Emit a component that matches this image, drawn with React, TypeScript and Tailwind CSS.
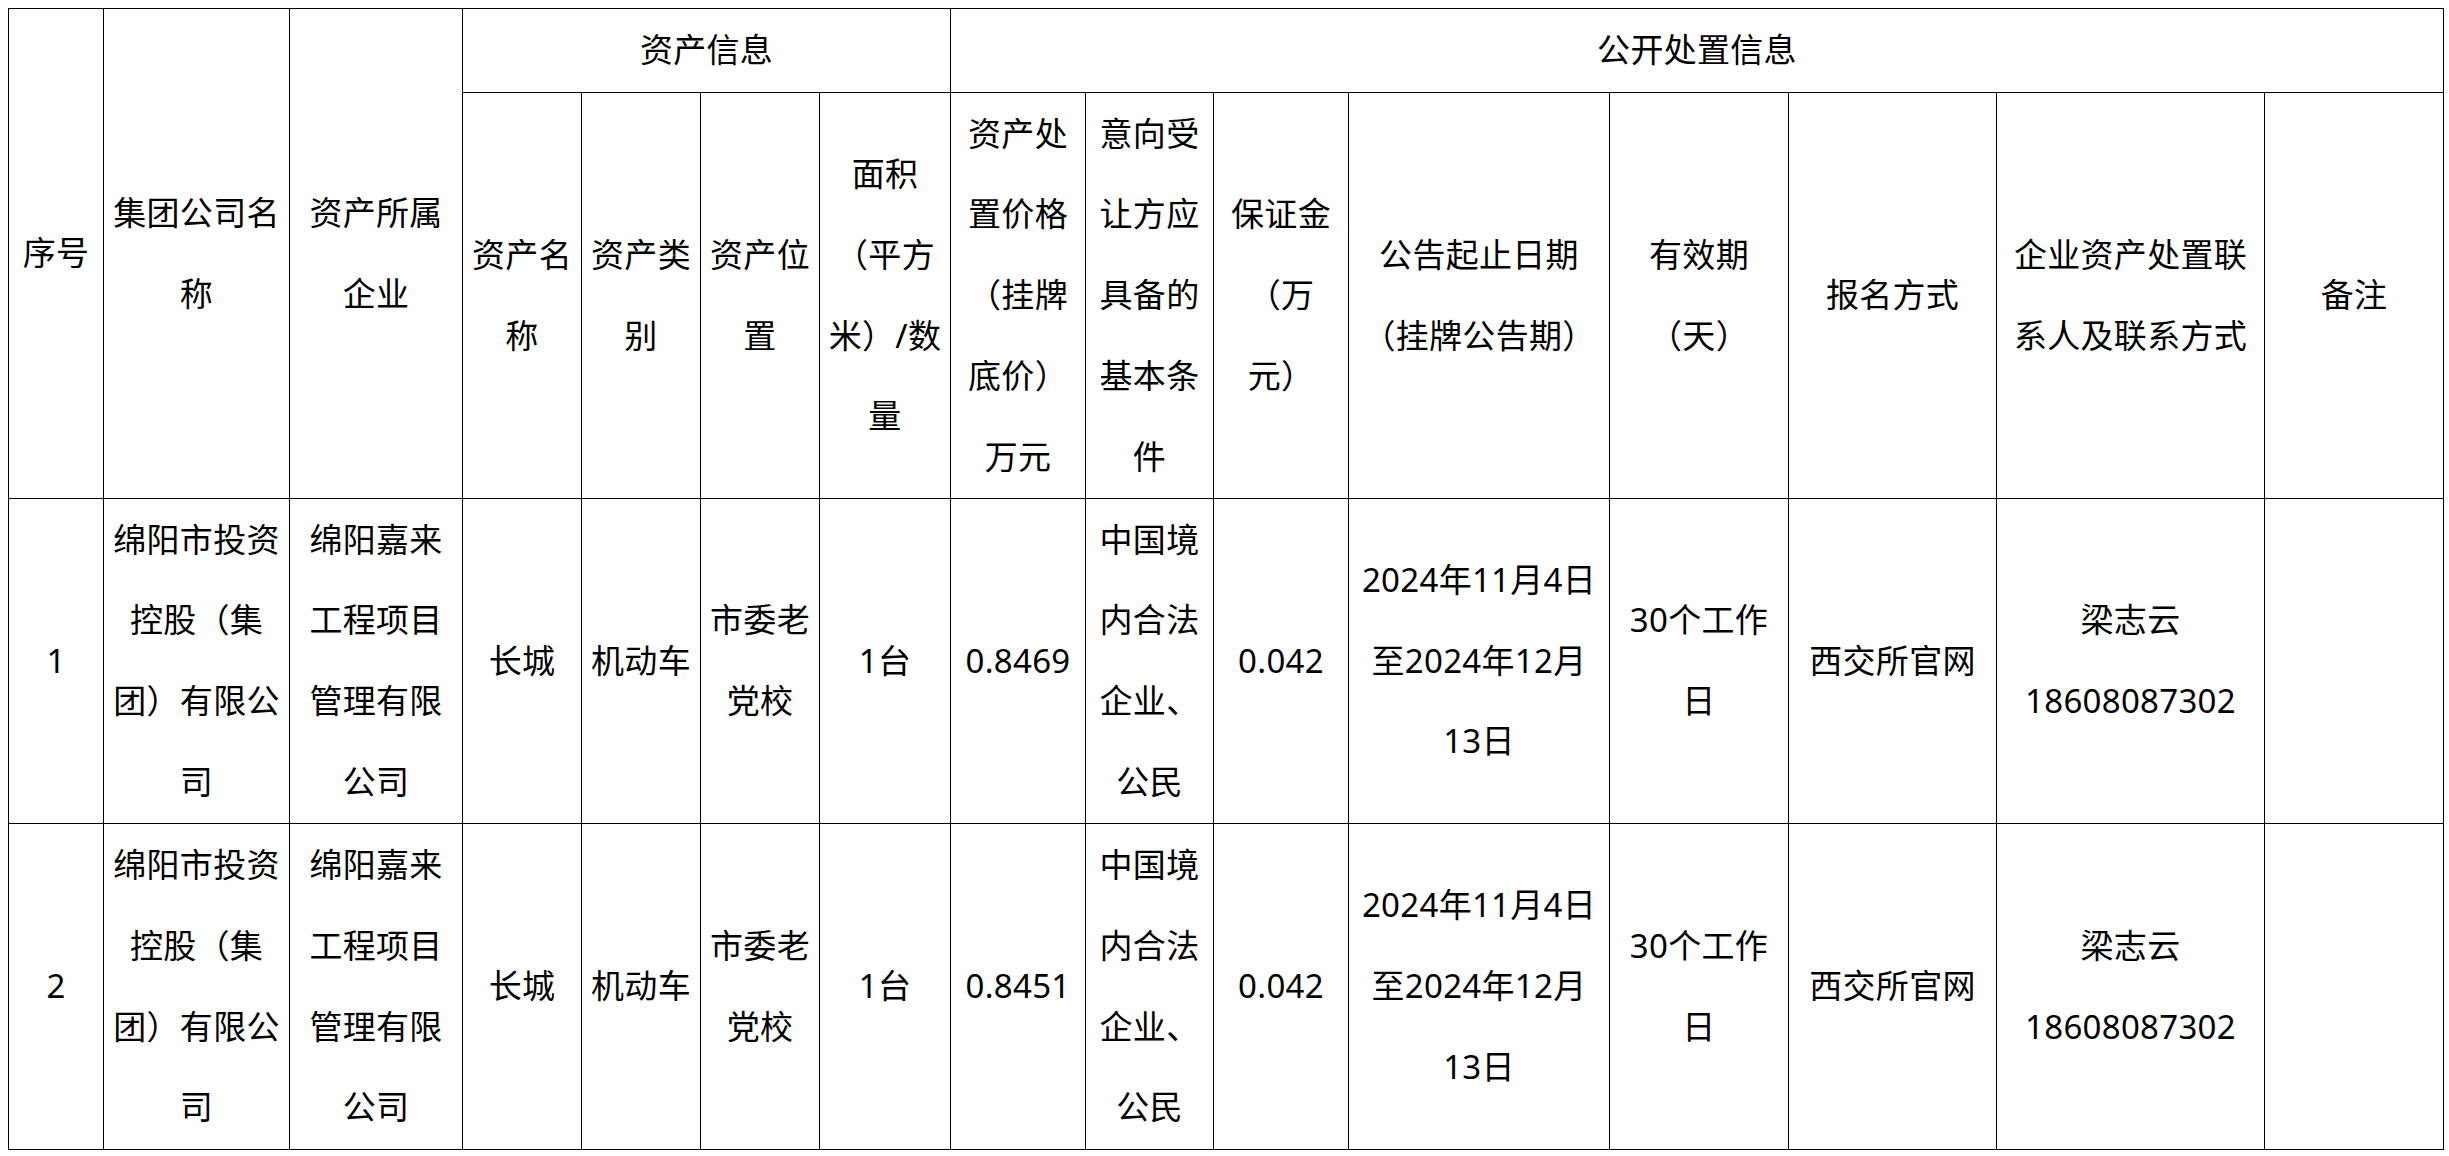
import { ReactNode } from "react";

type Row = {
  no: string;
  group: string;
  company: string;
  name: string;
  kind: string;
  location: string;
  amount: string;
  price: string;
  terms: string;
  deposit: string;
  period: string;
  validity: string;
  signup: string;
  contact: string;
  phone: string;
  note: string;
};

const rows: Row[] = [
  {
    no: "1",
    group: "绵阳市投资控股（集团）有限公司",
    company: "绵阳嘉来工程项目管理有限公司",
    name: "长城",
    kind: "机动车",
    location: "市委老党校",
    amount: "1台",
    price: "0.8469",
    terms: "中国境内合法企业、公民",
    deposit: "0.042",
    period: "2024年11月4日至2024年12月13日",
    validity: "30个工作日",
    signup: "西交所官网",
    contact: "梁志云",
    phone: "18608087302",
    note: "",
  },
  {
    no: "2",
    group: "绵阳市投资控股（集团）有限公司",
    company: "绵阳嘉来工程项目管理有限公司",
    name: "长城",
    kind: "机动车",
    location: "市委老党校",
    amount: "1台",
    price: "0.8451",
    terms: "中国境内合法企业、公民",
    deposit: "0.042",
    period: "2024年11月4日至2024年12月13日",
    validity: "30个工作日",
    signup: "西交所官网",
    contact: "梁志云",
    phone: "18608087302",
    note: "",
  },
];

const Cell = ({
  children,
  className = "",
}: {
  children?: ReactNode;
  className?: string;
}) => (
  <div
    className={`bg-white flex items-center justify-center text-center px-1 ${className}`}
  >
    <div className="w-full">{children}</div>
  </div>
);

const App = () => {
  return (
    <div className="min-h-screen bg-white p-2 text-black">
      <div
        className="grid w-max gap-px bg-black p-px text-[33px] leading-[80.7px] tracking-[0.3px] [text-spacing-trim:space-all] grid-cols-[94px_185px_172px_118px_118px_118px_130px_134px_127px_134px_260px_178px_207px_267px_178px] grid-rows-[83px_405px_324px_325px]"
        style={{ fontFamily: '"Noto Sans", "Noto Sans CJK SC", sans-serif' }}
      >
        {/* Header */}
        <Cell className="row-span-2">序号</Cell>
        <Cell className="row-span-2">集团公司名称</Cell>
        <Cell className="row-span-2">资产所属企业</Cell>
        <Cell className="col-span-4">资产信息</Cell>
        <Cell className="col-span-8">公开处置信息</Cell>

        <Cell>资产名称</Cell>
        <Cell>资产类别</Cell>
        <Cell>资产位置</Cell>
        <Cell>面积（平方米）/数量</Cell>
        <Cell>资产处置价格（挂牌底价）万元</Cell>
        <Cell>意向受让方应具备的基本条件</Cell>
        <Cell>保证金（万元）</Cell>
        <Cell>公告起止日期（挂牌公告期）</Cell>
        <Cell>有效期（天）</Cell>
        <Cell>报名方式</Cell>
        <Cell>企业资产处置联系人及联系方式</Cell>
        <Cell>备注</Cell>

        {/* Body */}
        {rows.map((r) => (
          <div key={r.no} className="contents">
            <Cell>{r.no}</Cell>
            <Cell>{r.group}</Cell>
            <Cell>{r.company}</Cell>
            <Cell>{r.name}</Cell>
            <Cell>{r.kind}</Cell>
            <Cell>{r.location}</Cell>
            <Cell>{r.amount}</Cell>
            <Cell>{r.price}</Cell>
            <Cell>{r.terms}</Cell>
            <Cell>{r.deposit}</Cell>
            <Cell className="px-2">{r.period}</Cell>
            <Cell>{r.validity}</Cell>
            <Cell>{r.signup}</Cell>
            <Cell>
              {r.contact}
              <br />
              {r.phone}
            </Cell>
            <Cell>{r.note}</Cell>
          </div>
        ))}
      </div>
    </div>
  );
};

export default App;
